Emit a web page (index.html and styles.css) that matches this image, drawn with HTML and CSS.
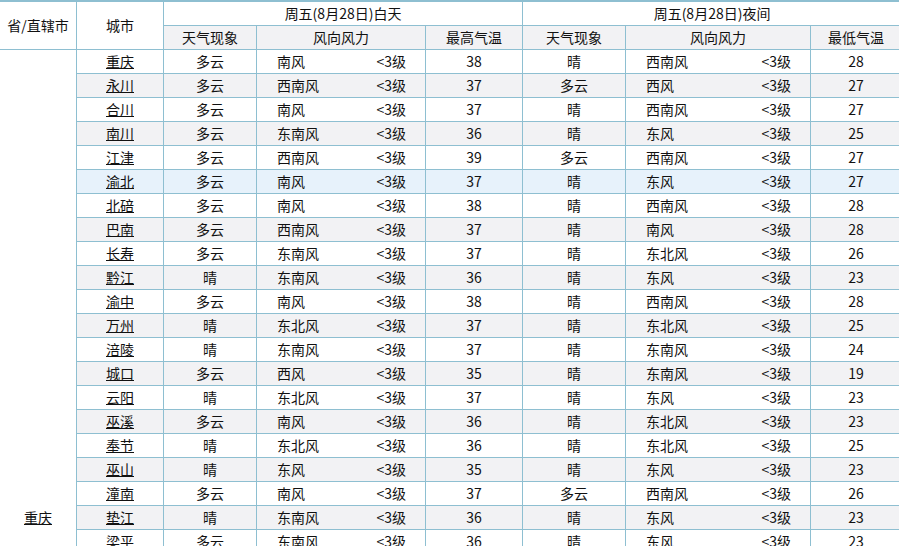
FILE: index.html
```html
<!DOCTYPE html>
<html lang="zh-CN">
<head>
<meta charset="utf-8">
<title>重庆天气</title>
<link rel="stylesheet" href="styles.css">
</head>
<body>
<table class="weather">
<colgroup>
<col class="c1"><col class="c2"><col class="c3"><col class="c4"><col class="c5"><col class="c6"><col class="c7"><col class="c8">
</colgroup>
<thead>
<tr>
<th rowspan="2" class="tall">省/直辖市</th>
<th rowspan="2" class="tall">城市</th>
<th colspan="3">周五(8月28日)白天</th>
<th colspan="3" class="last">周五(8月28日)夜间</th>
</tr>
<tr class="sub">
<th>天气现象</th><th>风向风力</th><th>最高气温</th><th>天气现象</th><th>风向风力</th><th class="last">最低气温</th>
</tr>
</thead>
<tbody>
<tr><td rowspan="39" class="prov"><a href="#">重庆</a></td><td><a href="#">重庆</a></td><td>多云</td><td><div class="wind"><span>南风</span><span>&lt;3级</span></div></td><td>38</td><td>晴</td><td><div class="wind"><span>西南风</span><span>&lt;3级</span></div></td><td class="last">28</td></tr>
<tr class="alt"><td><a href="#">永川</a></td><td>多云</td><td><div class="wind"><span>西南风</span><span>&lt;3级</span></div></td><td>37</td><td>多云</td><td><div class="wind"><span>西风</span><span>&lt;3级</span></div></td><td class="last">27</td></tr>
<tr><td><a href="#">合川</a></td><td>多云</td><td><div class="wind"><span>南风</span><span>&lt;3级</span></div></td><td>37</td><td>晴</td><td><div class="wind"><span>西南风</span><span>&lt;3级</span></div></td><td class="last">27</td></tr>
<tr class="alt"><td><a href="#">南川</a></td><td>多云</td><td><div class="wind"><span>东南风</span><span>&lt;3级</span></div></td><td>36</td><td>晴</td><td><div class="wind"><span>东风</span><span>&lt;3级</span></div></td><td class="last">25</td></tr>
<tr><td><a href="#">江津</a></td><td>多云</td><td><div class="wind"><span>西南风</span><span>&lt;3级</span></div></td><td>39</td><td>多云</td><td><div class="wind"><span>西南风</span><span>&lt;3级</span></div></td><td class="last">27</td></tr>
<tr class="hover"><td><a href="#">渝北</a></td><td>多云</td><td><div class="wind"><span>南风</span><span>&lt;3级</span></div></td><td>37</td><td>晴</td><td><div class="wind"><span>东风</span><span>&lt;3级</span></div></td><td class="last">27</td></tr>
<tr><td><a href="#">北碚</a></td><td>多云</td><td><div class="wind"><span>南风</span><span>&lt;3级</span></div></td><td>38</td><td>晴</td><td><div class="wind"><span>西南风</span><span>&lt;3级</span></div></td><td class="last">28</td></tr>
<tr class="alt"><td><a href="#">巴南</a></td><td>多云</td><td><div class="wind"><span>西南风</span><span>&lt;3级</span></div></td><td>37</td><td>晴</td><td><div class="wind"><span>南风</span><span>&lt;3级</span></div></td><td class="last">28</td></tr>
<tr><td><a href="#">长寿</a></td><td>多云</td><td><div class="wind"><span>东南风</span><span>&lt;3级</span></div></td><td>37</td><td>晴</td><td><div class="wind"><span>东北风</span><span>&lt;3级</span></div></td><td class="last">26</td></tr>
<tr class="alt"><td><a href="#">黔江</a></td><td>晴</td><td><div class="wind"><span>东南风</span><span>&lt;3级</span></div></td><td>36</td><td>晴</td><td><div class="wind"><span>东风</span><span>&lt;3级</span></div></td><td class="last">23</td></tr>
<tr><td><a href="#">渝中</a></td><td>多云</td><td><div class="wind"><span>南风</span><span>&lt;3级</span></div></td><td>38</td><td>晴</td><td><div class="wind"><span>西南风</span><span>&lt;3级</span></div></td><td class="last">28</td></tr>
<tr class="alt"><td><a href="#">万州</a></td><td>晴</td><td><div class="wind"><span>东北风</span><span>&lt;3级</span></div></td><td>37</td><td>晴</td><td><div class="wind"><span>东北风</span><span>&lt;3级</span></div></td><td class="last">25</td></tr>
<tr><td><a href="#">涪陵</a></td><td>晴</td><td><div class="wind"><span>东南风</span><span>&lt;3级</span></div></td><td>37</td><td>晴</td><td><div class="wind"><span>东南风</span><span>&lt;3级</span></div></td><td class="last">24</td></tr>
<tr class="alt"><td><a href="#">城口</a></td><td>多云</td><td><div class="wind"><span>西风</span><span>&lt;3级</span></div></td><td>35</td><td>晴</td><td><div class="wind"><span>东南风</span><span>&lt;3级</span></div></td><td class="last">19</td></tr>
<tr><td><a href="#">云阳</a></td><td>晴</td><td><div class="wind"><span>东北风</span><span>&lt;3级</span></div></td><td>37</td><td>晴</td><td><div class="wind"><span>东风</span><span>&lt;3级</span></div></td><td class="last">23</td></tr>
<tr class="alt"><td><a href="#">巫溪</a></td><td>多云</td><td><div class="wind"><span>南风</span><span>&lt;3级</span></div></td><td>36</td><td>晴</td><td><div class="wind"><span>东北风</span><span>&lt;3级</span></div></td><td class="last">23</td></tr>
<tr><td><a href="#">奉节</a></td><td>晴</td><td><div class="wind"><span>东北风</span><span>&lt;3级</span></div></td><td>36</td><td>晴</td><td><div class="wind"><span>东北风</span><span>&lt;3级</span></div></td><td class="last">25</td></tr>
<tr class="alt"><td><a href="#">巫山</a></td><td>晴</td><td><div class="wind"><span>东风</span><span>&lt;3级</span></div></td><td>35</td><td>晴</td><td><div class="wind"><span>东风</span><span>&lt;3级</span></div></td><td class="last">23</td></tr>
<tr><td><a href="#">潼南</a></td><td>多云</td><td><div class="wind"><span>南风</span><span>&lt;3级</span></div></td><td>37</td><td>多云</td><td><div class="wind"><span>西南风</span><span>&lt;3级</span></div></td><td class="last">26</td></tr>
<tr class="alt"><td><a href="#">垫江</a></td><td>晴</td><td><div class="wind"><span>东南风</span><span>&lt;3级</span></div></td><td>36</td><td>晴</td><td><div class="wind"><span>东风</span><span>&lt;3级</span></div></td><td class="last">23</td></tr>
<tr><td><a href="#">梁平</a></td><td>多云</td><td><div class="wind"><span>东南风</span><span>&lt;3级</span></div></td><td>36</td><td>晴</td><td><div class="wind"><span>东风</span><span>&lt;3级</span></div></td><td class="last">23</td></tr>
<tr class="alt"><td><a href="#">酉阳</a></td><td>晴</td><td><div class="wind"><span>东风</span><span>&lt;3级</span></div></td><td>35</td><td>晴</td><td><div class="wind"><span>东风</span><span>&lt;3级</span></div></td><td class="last">22</td></tr>
<tr><td><a href="#">綦江</a></td><td>多云</td><td><div class="wind"><span>南风</span><span>&lt;3级</span></div></td><td>38</td><td>晴</td><td><div class="wind"><span>南风</span><span>&lt;3级</span></div></td><td class="last">27</td></tr>
<tr class="alt"><td><a href="#">大足</a></td><td>多云</td><td><div class="wind"><span>南风</span><span>&lt;3级</span></div></td><td>36</td><td>多云</td><td><div class="wind"><span>西南风</span><span>&lt;3级</span></div></td><td class="last">26</td></tr>
<tr><td><a href="#">秀山</a></td><td>晴</td><td><div class="wind"><span>东风</span><span>&lt;3级</span></div></td><td>35</td><td>晴</td><td><div class="wind"><span>东风</span><span>&lt;3级</span></div></td><td class="last">23</td></tr>
<tr class="alt"><td><a href="#">丰都</a></td><td>晴</td><td><div class="wind"><span>东南风</span><span>&lt;3级</span></div></td><td>37</td><td>晴</td><td><div class="wind"><span>东风</span><span>&lt;3级</span></div></td><td class="last">25</td></tr>
<tr><td><a href="#">忠县</a></td><td>晴</td><td><div class="wind"><span>东北风</span><span>&lt;3级</span></div></td><td>37</td><td>晴</td><td><div class="wind"><span>东北风</span><span>&lt;3级</span></div></td><td class="last">25</td></tr>
<tr class="alt"><td><a href="#">开州</a></td><td>晴</td><td><div class="wind"><span>东北风</span><span>&lt;3级</span></div></td><td>37</td><td>晴</td><td><div class="wind"><span>东北风</span><span>&lt;3级</span></div></td><td class="last">25</td></tr>
<tr><td><a href="#">荣昌</a></td><td>多云</td><td><div class="wind"><span>南风</span><span>&lt;3级</span></div></td><td>36</td><td>多云</td><td><div class="wind"><span>西南风</span><span>&lt;3级</span></div></td><td class="last">26</td></tr>
<tr class="alt"><td><a href="#">彭水</a></td><td>晴</td><td><div class="wind"><span>东南风</span><span>&lt;3级</span></div></td><td>36</td><td>晴</td><td><div class="wind"><span>东风</span><span>&lt;3级</span></div></td><td class="last">23</td></tr>
<tr><td><a href="#">武隆</a></td><td>晴</td><td><div class="wind"><span>东南风</span><span>&lt;3级</span></div></td><td>36</td><td>晴</td><td><div class="wind"><span>东风</span><span>&lt;3级</span></div></td><td class="last">23</td></tr>
<tr class="alt"><td><a href="#">石柱</a></td><td>晴</td><td><div class="wind"><span>东南风</span><span>&lt;3级</span></div></td><td>35</td><td>晴</td><td><div class="wind"><span>东风</span><span>&lt;3级</span></div></td><td class="last">22</td></tr>
<tr><td><a href="#">璧山</a></td><td>多云</td><td><div class="wind"><span>南风</span><span>&lt;3级</span></div></td><td>37</td><td>晴</td><td><div class="wind"><span>西南风</span><span>&lt;3级</span></div></td><td class="last">27</td></tr>
<tr class="alt"><td><a href="#">铜梁</a></td><td>多云</td><td><div class="wind"><span>南风</span><span>&lt;3级</span></div></td><td>37</td><td>多云</td><td><div class="wind"><span>西南风</span><span>&lt;3级</span></div></td><td class="last">26</td></tr>
<tr><td><a href="#">大渡口</a></td><td>多云</td><td><div class="wind"><span>南风</span><span>&lt;3级</span></div></td><td>38</td><td>晴</td><td><div class="wind"><span>西南风</span><span>&lt;3级</span></div></td><td class="last">28</td></tr>
<tr class="alt"><td><a href="#">江北</a></td><td>多云</td><td><div class="wind"><span>南风</span><span>&lt;3级</span></div></td><td>38</td><td>晴</td><td><div class="wind"><span>东风</span><span>&lt;3级</span></div></td><td class="last">28</td></tr>
<tr><td><a href="#">沙坪坝</a></td><td>多云</td><td><div class="wind"><span>南风</span><span>&lt;3级</span></div></td><td>38</td><td>晴</td><td><div class="wind"><span>西南风</span><span>&lt;3级</span></div></td><td class="last">28</td></tr>
<tr class="alt"><td><a href="#">九龙坡</a></td><td>多云</td><td><div class="wind"><span>南风</span><span>&lt;3级</span></div></td><td>38</td><td>晴</td><td><div class="wind"><span>西南风</span><span>&lt;3级</span></div></td><td class="last">28</td></tr>
<tr><td><a href="#">南岸</a></td><td>多云</td><td><div class="wind"><span>南风</span><span>&lt;3级</span></div></td><td>38</td><td>晴</td><td><div class="wind"><span>南风</span><span>&lt;3级</span></div></td><td class="last">28</td></tr>
</tbody>
</table>
</body>
</html>
```

FILE: styles.css
```css
html, body {
  margin: 0;
  padding: 0;
  background: #fff;
  overflow: hidden;
}
body {
  font-family: "Noto Sans CJK SC", "Noto Sans", sans-serif;
  font-size: 14px;
  color: #111;
}
.weather {
  width: 901px;
  table-layout: fixed;
  border-collapse: separate;
  border-spacing: 0;
  border-top: 2px solid #8ebfd1;
}
.c1 { width: 77px; }
.c2 { width: 87px; }
.c3 { width: 93px; }
.c4 { width: 169px; }
.c5 { width: 97px; }
.c6 { width: 103px; }
.c7 { width: 185px; }
.c8 { width: 90px; }
.weather th,
.weather td {
  box-sizing: border-box;
  height: 24px;
  padding: 0;
  border-right: 1px solid #8ebfd1;
  border-bottom: 1px solid #8ebfd1;
  text-align: center;
  vertical-align: middle;
  font-weight: normal;
  line-height: 23px;
  white-space: nowrap;
  background: #fff;
}
.weather th.last,
.weather td.last {
  border-right: none;
}
.weather .sub th {
  background: #f2f2f4;
}
.weather tr.alt td {
  background: #f2f2f4;
}
.weather tr.hover td {
  background: #e7f2fb;
}
.weather td.prov {
  background: #fff;
}
.weather a {
  color: #111;
  text-decoration: underline;
}
.wind {
  display: flex;
  justify-content: space-between;
  padding: 0 19px 0 20px;
}
```
